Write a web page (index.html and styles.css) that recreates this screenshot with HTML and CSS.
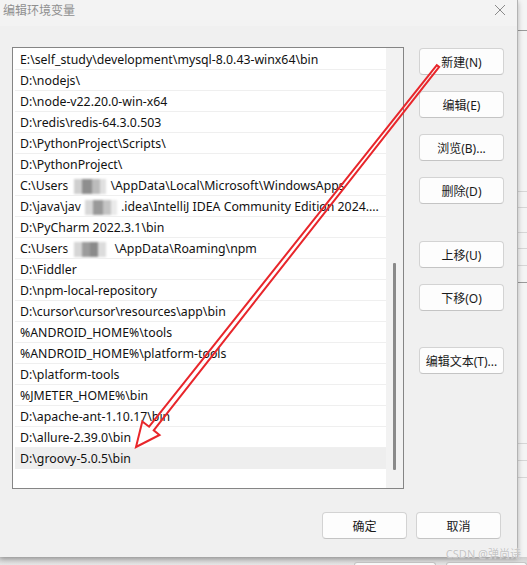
FILE: index.html
```html
<!DOCTYPE html>
<html lang="zh-CN">
<head>
<meta charset="utf-8">
<title>编辑环境变量</title>
<link rel="stylesheet" href="styles.css">
</head>
<body>
<div class="screen">
  <div class="dialog">
    <div class="titlebar">
      <span class="title">编辑环境变量</span>
      <svg class="close" width="12" height="12" viewBox="0 0 12 12"><path d="M1 1 L11 11 M11 1 L1 11" stroke="#8a8a8a" stroke-width="1" fill="none"/></svg>
    </div>
    <div class="main">
      <div class="listbox">
        <ul class="rows">
          <li class="row">E:\self_study\development\mysql-8.0.43-winx64\bin</li>
          <li class="row">D:\nodejs\</li>
          <li class="row">D:\node-v22.20.0-win-x64</li>
          <li class="row">D:\redis\redis-64.3.0.503</li>
          <li class="row">D:\PythonProject\Scripts\</li>
          <li class="row">D:\PythonProject\</li>
          <li class="row">C:\Users<span class="mosaic m1"></span>\AppData\Local\Microsoft\WindowsApps</li>
          <li class="row">D:\java\jav<span class="mosaic m2"></span>.idea\IntelliJ IDEA Community Edition 2024....</li>
          <li class="row">D:\PyCharm 2022.3.1\bin</li>
          <li class="row">C:\Users<span class="mosaic m3"></span>\AppData\Roaming\npm</li>
          <li class="row">D:\Fiddler</li>
          <li class="row">D:\npm-local-repository</li>
          <li class="row">D:\cursor\cursor\resources\app\bin</li>
          <li class="row">%ANDROID_HOME%\tools</li>
          <li class="row">%ANDROID_HOME%\platform-tools</li>
          <li class="row">D:\platform-tools</li>
          <li class="row">%JMETER_HOME%\bin</li>
          <li class="row">D:\apache-ant-1.10.17\bin</li>
          <li class="row">D:\allure-2.39.0\bin</li>
          <li class="row selected">D:\groovy-5.0.5\bin</li>
        </ul>
        <div class="scrollbar"><div class="thumb"></div></div>
      </div>
      <div class="side">
        <button class="btn">新建(N)</button>
        <button class="btn">编辑(E)</button>
        <button class="btn">浏览(B)...</button>
        <button class="btn">删除(D)</button>
        <button class="btn group2">上移(U)</button>
        <button class="btn">下移(O)</button>
        <button class="btn group3">编辑文本(T)...</button>
      </div>
    </div>
    <div class="footer">
      <button class="btn">确定</button>
      <button class="btn">取消</button>
    </div>
  </div>
  <div class="edge">
    <div class="eline dark e1"></div>
    <div class="eline e2"></div>
    <div class="eline e3"></div>
    <div class="eline e4"></div>
    <div class="eline e5"></div>
    <div class="eline e6"></div>
    <div class="eline dark e7"></div>
    <div class="eline e8"></div>
    <div class="eline e9"></div>
    <div class="eline e10"></div>
  </div>
</div>
<div class="under">
  <div class="peek p1"></div>
  <div class="peek p2"></div>
</div>
<svg class="arrow" width="527" height="565" viewBox="0 0 527 565">
  <polygon points="439.2,66.9 153.7,430.4 159.5,435.0 136,447 142.3,421.4 149.1,426.7 436.8,65.1" fill="none" stroke="#e8262b" stroke-width="2" stroke-linejoin="miter"/>
</svg>
<div class="watermark">CSDN @弹尚诗</div>
</body>
</html>
```

FILE: styles.css
```css
* { box-sizing: border-box; }
html, body { margin: 0; padding: 0; }
body {
  width: 527px;
  height: 565px;
  overflow: hidden;
  background: #e4e4e4;
  font-family: "Noto Sans", "Noto Sans CJK SC", sans-serif;
  font-size: 12px;
  color: #000;
  position: relative;
}
.screen {
  display: flex;
  height: 557px;
}
.dialog {
  width: 518px;
  height: 557px;
  background: #f0f0f0;
  border-right: 1px solid #b3b3b3;
  box-shadow: 0 2px 5px rgba(0,0,0,0.28);
  display: flex;
  flex-direction: column;
  position: relative;
  z-index: 1;
}
.titlebar {
  height: 26px;
  background: #f3f3f3;
  display: flex;
  align-items: center;
  justify-content: space-between;
  padding: 0 11px 7px 3px;
}
.title {
  font-family: "Noto Sans CJK SC", sans-serif;
  font-size: 12px;
  color: #8f8f8f;
}
.close { display: block; }
.main {
  display: flex;
  gap: 15px;
  padding-left: 12px;
  margin-top: 21px;
}
.listbox {
  width: 392px;
  height: 442px;
  border: 1px solid #858585;
  background: #fff;
  display: flex;
}
.rows {
  list-style: none;
  margin: 0;
  padding: 1px 0 0 0;
  width: 373px;
}
.row {
  height: 21px;
  line-height: 22px;
  margin-left: 2px;
  padding-left: 5px;
  border-bottom: 1px solid #efefef;
  white-space: nowrap;
  overflow: hidden;
  font-size: 12.3px;
  color: #111;
}
.row.selected {
  background: #eeeeee;
  border-bottom-color: #eeeeee;
}
.mosaic {
  display: inline-block;
  vertical-align: middle;
  height: 15px;
  filter: blur(1px);
}
.m1 {
  width: 42px;
  background: linear-gradient(90deg, #fff 0 6px, #cfcfcf 6px 14px, #8e8e8e 14px 24px, #bcbcbc 24px 32px, #e0e0e0 32px 38px, #fff 38px);
}
.m2 {
  width: 40px;
  background: linear-gradient(90deg, #fff 0 4px, #d8d8d8 4px 12px, #9a9a9a 12px 22px, #c4c4c4 22px 30px, #eaeaea 30px 36px, #fff 36px);
}
.m3 {
  width: 46px;
  background: linear-gradient(90deg, #fff 0 6px, #d6d6d6 6px 14px, #9c9c9c 14px 22px, #8a8a8a 22px 30px, #dcdcdc 30px 38px, #fff 38px);
}
.scrollbar {
  width: 17px;
  background: #f2f2f2;
  padding-left: 7px;
}
.thumb {
  width: 3px;
  height: 207px;
  margin-top: 215px;
  background: #8a8a8a;
  border-radius: 1px;
}
.side {
  display: flex;
  flex-direction: column;
  gap: 16px;
  padding-top: 1px;
}
.btn {
  width: 85px;
  height: 27px;
  padding: 0;
  background: #fdfdfd;
  border: 1px solid #d3d3d3;
  border-bottom-color: #c4c4c4;
  border-radius: 4px;
  font-family: "Noto Sans", "Noto Sans CJK SC", sans-serif;
  font-size: 12px;
  color: #1a1a1a;
  text-align: center;
}
.group2 { margin-top: 21px; }
.group3 { margin-top: 20px; }
.footer {
  display: flex;
  justify-content: flex-end;
  gap: 9px;
  padding-right: 16px;
  margin-top: 23px;
}
.edge {
  width: 9px;
  background: #f4f4f4;
  position: relative;
}
.eline {
  height: 1px;
  background: #d6d6d6;
  margin-top: 15px;
}
.eline.dark { background: #9a9a9a; }
.e1 { margin-top: 30px; }
.e2 { margin-top: 160px; }
.e3 { margin-top: 15px; }
.e4 { margin-top: 24px; }
.e5 { margin-top: 15px; }
.e6 { margin-top: 16px; }
.e7 { margin-top: 16px; }
.e8 { margin-top: 160px; }
.e9 { margin-top: 16px; }
.e10 { margin-top: 16px; }
.under {
  height: 8px;
  background: linear-gradient(#cfcfcf, #e6e6e6);
  display: flex;
  gap: 10px;
  padding-left: 354px;
  padding-top: 5px;
}
.peek {
  width: 85px;
  height: 3px;
  background: #fafafa;
  border: 1px solid #c6c6c6;
  border-bottom: none;
  border-radius: 4px 4px 0 0;
}
.arrow {
  position: absolute;
  left: 0;
  top: 0;
  pointer-events: none;
  z-index: 5;
}
.watermark {
  position: absolute;
  right: 6px;
  top: 545px;
  z-index: 6;
  font-family: "Noto Sans", "Noto Sans CJK SC", sans-serif;
  font-size: 11px;
  color: #c4c4c4;
  text-shadow: 0 0 1px #fff;
}
```
